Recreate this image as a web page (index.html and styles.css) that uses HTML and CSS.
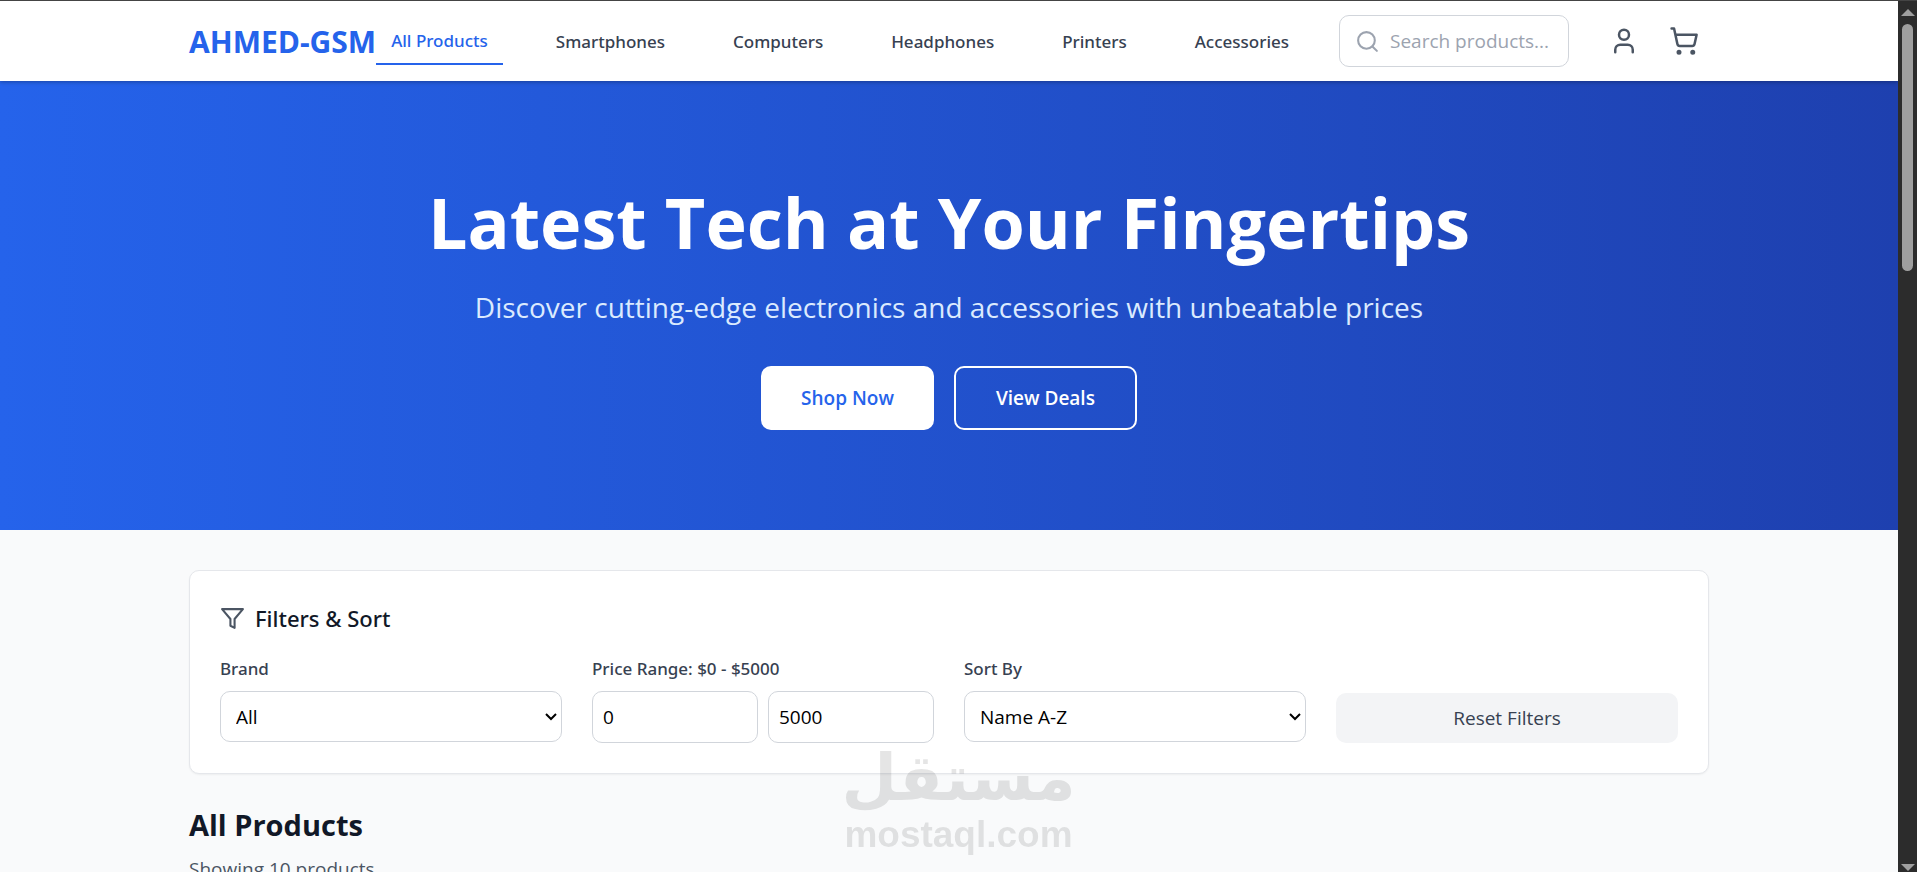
FILE: index.html
```html
<!DOCTYPE html>
<html lang="en">

<head>
  <meta charset="UTF-8">
  <meta name="viewport" content="width=device-width, initial-scale=1.0">
  <title>AHMED-GSM</title>
  <link rel="stylesheet" href="styles.css">
</head>

<body>
  <div class="page">
    <header class="header">
      <div class="container header-inner">
        <a href="#" class="logo">AHMED-GSM</a>
        <nav class="nav">
          <a href="#" class="nav-link active">All Products</a>
          <a href="#" class="nav-link">Smartphones</a>
          <a href="#" class="nav-link">Computers</a>
          <a href="#" class="nav-link">Headphones</a>
          <a href="#" class="nav-link">Printers</a>
          <a href="#" class="nav-link">Accessories</a>
        </nav>
        <div class="header-actions">
          <label class="search">
            <svg class="icon search-icon" viewBox="0 0 24 24">
              <circle cx="11" cy="11" r="8" />
              <path d="m21 21-4.3-4.3" />
            </svg>
            <input type="text" class="search-input" placeholder="Search products..." aria-label="Search products">
          </label>
          <button class="icon-button" aria-label="Account">
            <svg class="icon icon-large" viewBox="0 0 24 24">
              <path d="M19 21v-2a4 4 0 0 0-4-4H9a4 4 0 0 0-4 4v2" />
              <circle cx="12" cy="7" r="4" />
            </svg>
          </button>
          <button class="icon-button" aria-label="Cart">
            <svg class="icon icon-large" viewBox="0 0 24 24">
              <circle cx="8" cy="21" r="1" />
              <circle cx="19" cy="21" r="1" />
              <path d="M2.05 2.05h2l2.66 12.42a2 2 0 0 0 2 1.58h9.78a2 2 0 0 0 1.95-1.57l1.65-7.43H5.12" />
            </svg>
          </button>
        </div>
      </div>
    </header>

    <section class="hero">
      <h1 class="hero-title">Latest Tech at Your Fingertips</h1>
      <p class="hero-text">Discover cutting-edge electronics and accessories with unbeatable prices</p>
      <div class="hero-buttons">
        <button class="btn btn-white">Shop Now</button>
        <button class="btn btn-outline">View Deals</button>
      </div>
    </section>

    <main class="container main">
      <section class="filters">
        <div class="filters-header">
          <svg class="icon filters-icon" viewBox="0 0 24 24">
            <path d="M22 3H2l8 9.46V19l4 2v-8.54L22 3z" />
          </svg>
          <h3 class="filters-title">Filters &amp; Sort</h3>
        </div>
        <div class="filters-grid">
          <div class="field">
            <label for="brand">Brand</label>
            <select id="brand" class="control select">
              <option>All</option>
            </select>
          </div>
          <div class="field">
            <label for="min-price">Price Range: $0 - $5000</label>
            <div class="price-inputs">
              <input type="text" id="min-price" class="control" value="0">
              <input type="text" id="max-price" class="control" value="5000" aria-label="Maximum price">
            </div>
          </div>
          <div class="field">
            <label for="sort">Sort By</label>
            <select id="sort" class="control select">
              <option>Name A-Z</option>
            </select>
          </div>
          <button class="reset-button">Reset Filters</button>
        </div>
      </section>

      <h2 class="products-title">All Products</h2>
      <p class="products-count">Showing 10 products</p>
    </main>
  </div>

  <div class="scrollbar">
    <span class="arrow arrow-up"></span>
    <span class="thumb"></span>
    <span class="arrow arrow-down"></span>
  </div>

  <div class="watermark">
    <span class="watermark-ar" lang="ar" dir="rtl">مستقل</span>
    <span class="watermark-en">mostaql.com</span>
  </div>
</body>

</html>
```

FILE: styles.css
```css
* {
  box-sizing: border-box;
  margin: 0;
  padding: 0;
}

body {
  font-family: "Open Sans", "Noto Sans", sans-serif;
  font-size: 19px;
  line-height: 30px;
  display: flex;
  height: 100vh;
  overflow: hidden;
  border-top: 1px solid #444444;
  background-color: #f9fafb;
  color: #111827;
}

button,
input,
select {
  font-family: inherit;
  font-size: inherit;
  line-height: inherit;
}

button {
  cursor: pointer;
  border: none;
}

a {
  text-decoration: none;
}

.page {
  flex: 1;
  min-width: 0;
  overflow: hidden;
}

.container {
  max-width: 1600px;
  margin: 0 auto;
  padding: 0 40px;
}

.icon {
  display: block;
  flex-shrink: 0;
  fill: none;
  stroke: currentColor;
  stroke-width: 2;
  stroke-linecap: round;
  stroke-linejoin: round;
}

.icon-large {
  width: 30px;
  height: 30px;
}

/* header */
.header {
  position: relative;
  background-color: #ffffff;
  box-shadow: 0 1px 4px rgba(0, 0, 0, 0.3);
}

.header-inner {
  display: flex;
  align-items: center;
  height: 80px;
}

.logo {
  padding-top: 2px;
  font-size: 30px;
  font-weight: 700;
  line-height: 42px;
  color: #2563eb;
}

.nav {
  display: flex;
  align-items: center;
  gap: 38px;
}

.nav-link {
  padding: 11px 15px 9px;
  font-family: "Noto Sans", sans-serif;
  font-size: 17px;
  font-weight: 500;
  line-height: 26px;
  color: #374151;
}

.nav-link.active {
  color: #2563eb;
  border-bottom: 2px solid #2563eb;
}

.header-actions {
  display: flex;
  align-items: center;
  gap: 10px;
  margin-left: auto;
}

.search {
  display: flex;
  align-items: center;
  gap: 10px;
  width: 230px;
  height: 52px;
  margin-right: 20px;
  padding: 0 15px;
  border: 1px solid #d1d5db;
  border-radius: 10px;
}

.search-icon {
  width: 25px;
  height: 25px;
  color: #9ca3af;
}

.search-input {
  flex: 1;
  min-width: 0;
  border: none;
  outline: none;
}

.search-input::placeholder {
  color: #9ca3af;
}

.icon-button {
  padding: 10px;
  background-color: transparent;
  color: #4b5563;
}

/* hero */
.hero {
  padding: 100px 40px;
  text-align: center;
  color: #ffffff;
  background: linear-gradient(to right, #2563eb, #1e40af);
}

.hero-title {
  margin-bottom: 24px;
  font-size: 70px;
  font-weight: 700;
  line-height: 82px;
}

.hero-text {
  margin-bottom: 39px;
  font-size: 28px;
  line-height: 40px;
  color: #dbeafe;
}

.hero-buttons {
  display: flex;
  justify-content: center;
  gap: 20px;
}

.btn {
  padding: 17px 40px;
  border-radius: 10px;
  font-weight: 600;
}

.btn-white {
  background-color: #ffffff;
  color: #2563eb;
}

.btn-outline {
  padding: 15px 40px;
  border: 2px solid #ffffff;
  background-color: transparent;
  color: #ffffff;
}

/* filters */
.main {
  padding-top: 40px;
}

.filters {
  margin-bottom: 30px;
  padding: 30px;
  background-color: #ffffff;
  border: 1px solid #e5e7eb;
  border-radius: 10px;
  box-shadow: 0 1px 2px rgba(0, 0, 0, 0.05);
}

.filters-header {
  display: flex;
  align-items: center;
  gap: 10px;
  margin-bottom: 20px;
}

.filters-icon {
  width: 25px;
  height: 25px;
  color: #4b5563;
}

.filters-title {
  font-family: "Noto Sans", sans-serif;
  font-size: 22px;
  font-weight: 500;
  line-height: 35px;
}

.filters-grid {
  display: grid;
  grid-template-columns: repeat(4, 1fr);
  gap: 30px;
}

.field label {
  display: block;
  margin-bottom: 9px;
  font-family: "Noto Sans", sans-serif;
  font-size: 17px;
  font-weight: 500;
  line-height: 26px;
  color: #374151;
}

.control {
  width: 100%;
  min-width: 0;
  height: 52px;
  padding: 0 10px;
  border: 1px solid #d1d5db;
  border-radius: 10px;
  background-color: #ffffff;
  color: #000000;
}

.select {
  height: 51px;
  padding: 0 20px 0 15px;
  appearance: none;
  background-image: url("data:image/svg+xml,%3Csvg xmlns='http://www.w3.org/2000/svg' viewBox='0 0 12 8' fill='none' stroke='black' stroke-width='2'%3E%3Cpath d='M1 1l5 5 5-5'/%3E%3C/svg%3E");
  background-repeat: no-repeat;
  background-position: right 4px center;
  background-size: 12px 8px;
}

.price-inputs {
  display: flex;
  gap: 10px;
}

.reset-button {
  align-self: end;
  height: 50px;
  border-radius: 10px;
  background-color: #f3f4f6;
  color: #374151;
}

/* products */
.products-title {
  margin-bottom: 8px;
  font-size: 29px;
  font-weight: 700;
  line-height: 42px;
}

.products-count {
  color: #4b5563;
}

/* scrollbar */
.scrollbar {
  display: flex;
  flex-direction: column;
  align-items: center;
  width: 19px;
  padding: 8px 0 1px;
  background-color: #2c2c2c;
}

.thumb {
  width: 11px;
  height: 247px;
  margin-top: 8px;
  border-radius: 6px;
  background-color: #9f9f9f;
}

.arrow {
  border-left: 7px solid transparent;
  border-right: 7px solid transparent;
}

.arrow-up {
  border-bottom: 7px solid #9f9f9f;
}

.arrow-down {
  margin-top: auto;
  border-top: 7px solid #9f9f9f;
}

/* watermark */
.watermark {
  position: fixed;
  left: 50%;
  bottom: 16px;
  transform: translateX(-50%);
  display: flex;
  flex-direction: column;
  align-items: center;
  font-weight: 700;
  color: #000000;
  opacity: 0.1;
  pointer-events: none;
}

.watermark-ar {
  font-family: "DejaVu Sans", sans-serif;
  font-size: 64px;
  line-height: 70px;
}

.watermark-en {
  font-family: "Liberation Sans", sans-serif;
  font-size: 37px;
  line-height: 43px;
}
```
